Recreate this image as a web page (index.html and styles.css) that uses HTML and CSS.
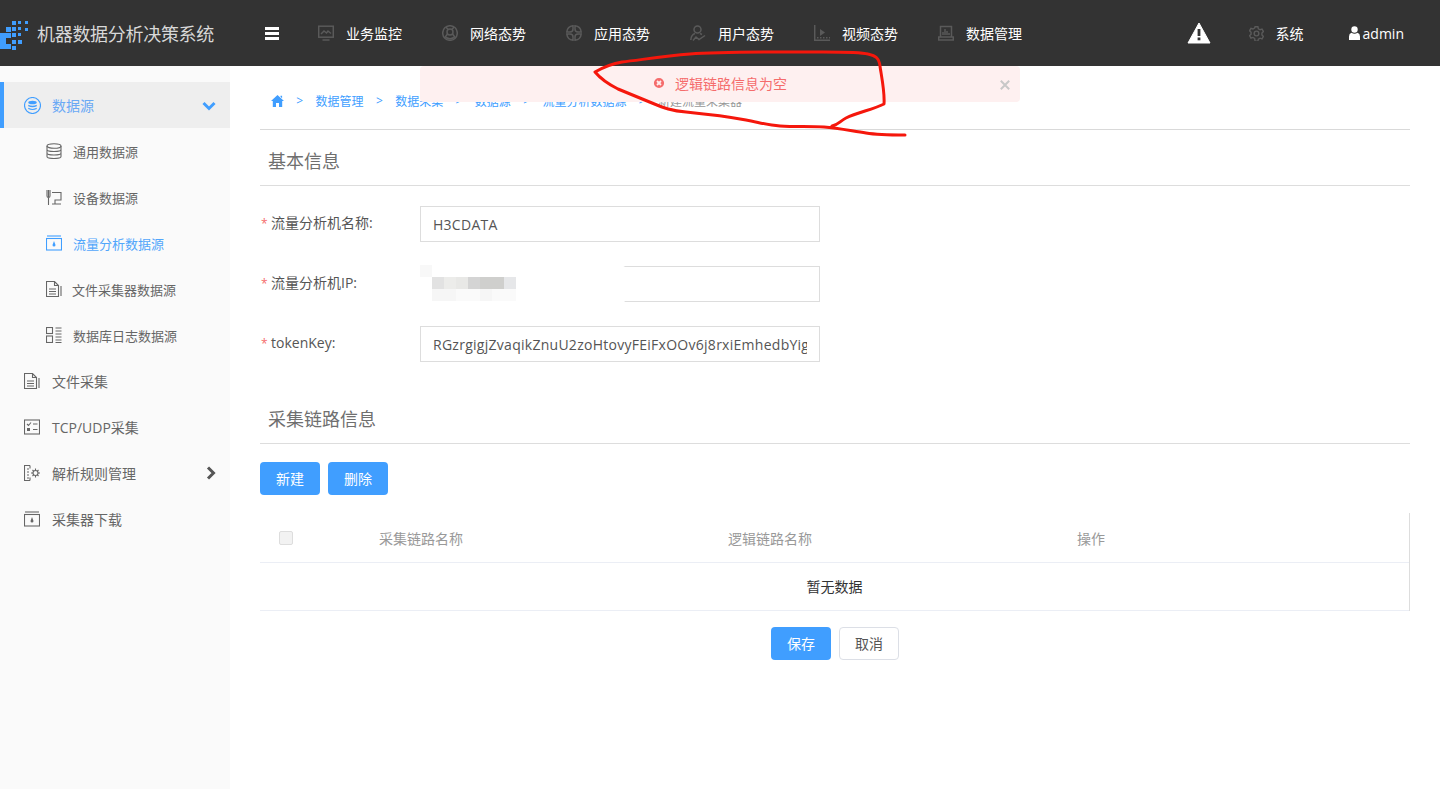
FILE: index.html
```html
<!DOCTYPE html>
<html lang="zh">
<head>
<meta charset="utf-8">
<title>机器数据分析决策系统</title>
<link rel="stylesheet" href="styles.css">
</head>
<body>
<header class="topbar">
  <div class="brand">
    <svg class="logo" width="30" height="36" viewBox="0 12 30 36">
      <path class="logo-l" d="M0 30h6v11h5v5H0z"/>
      <rect class="logo-b" x="6" y="24" width="5" height="5"/>
      <rect class="logo-b" x="6" y="30" width="5" height="5"/>
      <rect class="logo-b" x="12" y="18" width="4" height="4"/>
      <rect class="logo-b" x="12" y="24" width="4" height="4"/>
      <rect class="logo-b" x="12" y="30" width="4" height="4"/>
      <rect class="logo-b" x="12" y="37" width="4" height="4"/>
      <rect class="logo-b" x="12" y="43" width="4" height="4"/>
      <rect class="logo-b" x="18" y="18" width="3" height="3"/>
      <rect class="logo-b" x="18" y="24" width="3" height="3"/>
      <rect class="logo-b" x="18" y="30" width="3" height="3"/>
      <rect class="logo-b" x="18" y="37" width="4" height="4"/>
      <rect class="logo-b" x="25" y="18" width="3" height="3"/>
      <rect class="logo-b" x="25" y="25" width="3" height="3"/>
    </svg>
    <span class="brand-name">机器数据分析决策系统</span>
  </div>
  <div class="burger"><i></i><i></i><i></i></div>
  <nav class="nav">
    <a class="nav-item">
      <svg class="nav-ico" viewBox="0 0 16 16"><rect x="0.7" y="1.2" width="14.600" height="11"/><path d="M3 9l3-3 2.500 2L10 6l3 2.500M4.500 15h7"/></svg>
      <span>业务监控</span>
    </a>
    <a class="nav-item">
      <svg class="nav-ico" viewBox="0 0 16 16"><circle cx="8" cy="8" r="7.300"/><circle cx="8" cy="7" r="3"/><path d="M5.500 9L2.500 13M10.500 9l3 4M4 12.500q4 2.500 8 0M6 4.500L4 2M10 4.500L12 2"/></svg>
      <span>网络态势</span>
    </a>
    <a class="nav-item">
      <svg class="nav-ico" viewBox="0 0 16 16"><path d="M7 .8A7 7 0 0 0 .8 7H4Q7 7 7 4zM9 .8A7 7 0 0 1 15.200 7H12Q9 7 9 4zM7 15.200A7 7 0 0 1 .8 9H4Q7 9 7 12zM9 15.200A7 7 0 0 0 15.200 9H12Q9 9 9 12z"/></svg>
      <span>应用态势</span>
    </a>
    <a class="nav-item">
      <svg class="nav-ico" viewBox="0 0 16 16"><circle cx="7.500" cy="4.500" r="3.500"/><path d="M.8 15q.2-5 4.200-6.500M10 8.500l2 1M3 15.500l3-3.500 3 2.500 6-4"/></svg>
      <span>用户态势</span>
    </a>
    <a class="nav-item">
      <svg class="nav-ico" viewBox="0 0 16 16"><path d="M.7 0v15.300h15.300"/><path class="ico-fill" d="M6 4l5 3.500-5 3.500z"/><path class="ico-dash" d="M3 12.800h13"/></svg>
      <span>视频态势</span>
    </a>
    <a class="nav-item">
      <svg class="nav-ico" viewBox="0 0 16 16"><path d="M2.500 12V1.500h11V12M.7 12h14.600v3H.7zM5 10V7M7 10V4M9 10V6M11 10V8"/></svg>
      <span>数据管理</span>
    </a>
  </nav>
  <div class="top-right">
    <svg class="warn" width="24" height="22" viewBox="0 0 24 22"><path class="warn-tri" d="M12 1L23 21H1z"/><rect class="warn-mark" x="10.600" y="7" width="2.800" height="7"/><rect class="warn-mark" x="10.600" y="15.500" width="2.800" height="2.800"/></svg>
    <a class="sys">
      <svg class="nav-ico gear" viewBox="0 0 16 16"><circle cx="8" cy="8" r="2.500"/><path d="M6.500.8h3l.5 2.200 1.800 1 2.100-.7 1.500 2.600-1.600 1.500v2.200l1.600 1.500-1.500 2.600-2.100-.7-1.800 1-.5 2.200h-3L6 13.200l-1.800-1-2.100.7L.6 10.300l1.600-1.500V6.600L.6 5.100l1.500-2.600 2.100.7 1.800-1z"/></svg>
      <span>系统</span>
    </a>
    <a class="user">
      <svg class="user-ico" width="11" height="14" viewBox="0 0 11 14"><circle cx="5.500" cy="3.500" r="3.200"/><path d="M0 14v-3.500Q0 7.500 2.500 6.800q3 1.700 6 0Q11 7.500 11 10.500V14z"/></svg>
      <span>admin</span>
    </a>
  </div>
</header>

<div class="layout">
  <aside class="sidebar">
    <a class="menu-item active">
      <svg class="m-ico blue lg" viewBox="0 0 16 16"><circle cx="8" cy="8" r="7.500"/><ellipse class="solid" cx="8" cy="5.200" rx="4" ry="1.700"/><path class="solid" d="M4 7.200q4 2 8 0v1.500q-4 2-8 0zM4 10.200q4 2 8 0v1q-4 2-8 0z"/></svg>
      <span>数据源</span>
      <svg class="chev down" viewBox="0 0 14 10"><path d="M1.500 2L7 7.500 12.500 2"/></svg>
    </a>
    <a class="menu-item sub">
      <svg class="m-ico" viewBox="0 0 16 16"><ellipse cx="8" cy="3" rx="7" ry="2.300"/><path d="M1 3v10.500q0 2 7 2t7-2V3M1 6.500q0 2 7 2t7-2M1 10q0 2 7 2t7-2"/></svg>
      <span>通用数据源</span>
    </a>
    <a class="menu-item sub">
      <svg class="m-ico" viewBox="0 0 16 16"><path d="M1 1v6q0 1.500 1.500 1.500T4 7V1M2.500 1v15M6 3.500h9V11H9v4M6 15h9"/></svg>
      <span>设备数据源</span>
    </a>
    <a class="menu-item sub current">
      <svg class="m-ico blue" viewBox="0 0 16 16"><path d="M1 1h14"/><rect x=".5" y="3.500" width="15" height="11.500"/><path class="solid" d="M8 6l1.500 4a1.500 1.500 0 1 1-3 0z"/></svg>
      <span>流量分析数据源</span>
    </a>
    <a class="menu-item sub narrow">
      <svg class="m-ico" viewBox="0 0 16 16"><path d="M.5.500h8l4 4v11H.5zM8.500.500v4h4M15 5v10M3 8h7M3 10.500h7M3 13h7"/></svg>
      <span>文件采集器数据源</span>
    </a>
    <a class="menu-item sub">
      <svg class="m-ico" viewBox="0 0 16 16"><rect x=".5" y=".5" width="6" height="6"/><rect x=".5" y="9" width="6" height="6.500"/><path d="M9.500 1h6M9.500 4h6M9.500 7h6M9.500 10h6M9.500 13h6M9.500 15.500h6"/></svg>
      <span>数据库日志数据源</span>
    </a>
    <a class="menu-item">
      <svg class="m-ico" viewBox="0 0 16 16"><path d="M.5.500h8l4 4v11H.5zM8.500.500v4h4M15 5v10M3 8h7M3 10.500h7M3 13h7"/></svg>
      <span>文件采集</span>
    </a>
    <a class="menu-item">
      <svg class="m-ico" viewBox="0 0 16 16"><rect x=".5" y="1" width="15" height="14"/><path d="M3 5l1.500 1.500L7 3.500M9 5h4.500M9 10.500h4.500"/><rect class="solid" x="3" y="9" width="3" height="3"/></svg>
      <span>TCP/UDP采集</span>
    </a>
    <a class="menu-item">
      <svg class="m-ico" viewBox="0 0 16 16"><path d="M6 .5H.5v15H6M6 .5v3M6 12.500v3M3 4h2M3 7h2M3 10h2M3 13h2"/><circle cx="11.500" cy="8" r="2.500"/><path d="M11.500 3.500v2M11.500 10.500v2M7 8h2M14 8h2M8.500 5l1.300 1.300M13.200 9.700l1.300 1.300M8.500 11l1.300-1.300M13.200 6.300L14.500 5"/></svg>
      <span>解析规则管理</span>
      <svg class="chev right" viewBox="0 0 10 14"><path d="M2 1.500L7.500 7 2 12.500"/></svg>
    </a>
    <a class="menu-item">
      <svg class="m-ico" viewBox="0 0 16 16"><path d="M1 1h14"/><rect x=".5" y="3.500" width="15" height="11.500"/><path class="solid" d="M8 6l1.500 4a1.500 1.500 0 1 1-3 0z"/></svg>
      <span>采集器下载</span>
    </a>
  </aside>

  <main class="main">
    <div class="crumbs">
      <svg class="home" width="13" height="12" viewBox="0 0 13 12"><path d="M6.500 0L13 6h-1.800v6H8V8H5v4H1.800V6H0zM9.500 .8h1.600v2.400L9.500 1.800z"/></svg>
      <span class="sep">&gt;</span><a>数据管理</a>
      <span class="sep">&gt;</span><a>数据采集</a>
      <span class="sep">&gt;</span><a>数据源</a>
      <span class="sep">&gt;</span><a>流量分析数据源</a>
      <span class="sep">&gt;</span><span class="crumb-last">新建流量采集器</span>
    </div>

    <h2 class="section-title">基本信息</h2>
    <form class="form">
      <div class="row">
        <label class="lbl"><em>*</em>流量分析机名称:</label>
        <input class="field" type="text" value="H3CDATA">
      </div>
      <div class="row">
        <label class="lbl"><em>*</em>流量分析机IP:</label>
        <div class="field-wrap">
          <input class="field" type="text" value="">
          <div class="redact">
            <i class="m0"></i><b></b><b></b><b></b><b></b><b></b><b></b><b></b>
            <b></b><i class="c1"></i><i class="c2"></i><i class="c3"></i><i class="c4"></i><i class="c5"></i><i class="c5"></i><i class="c6"></i>
            <b></b><i class="c7"></i><i class="c7"></i><i class="c8"></i><i class="c8"></i><i class="c7"></i><i class="c8"></i><i class="c8"></i>
          </div>
        </div>
      </div>
      <div class="row">
        <label class="lbl"><em>*</em>tokenKey:</label>
        <input class="field" type="text" value="RGzrgigjZvaqikZnuU2zoHtovyFEiFxOOv6j8rxiEmhedbYigQpLk">
      </div>
    </form>

    <h2 class="section-title second">采集链路信息</h2>
    <div class="toolbar">
      <button class="btn primary" type="button">新建</button>
      <button class="btn primary" type="button">删除</button>
    </div>

    <table class="grid">
      <colgroup><col class="c-check"><col class="c-col"><col class="c-col"><col></colgroup>
      <thead>
        <tr>
          <th><span class="check"></span></th>
          <th>采集链路名称</th>
          <th>逻辑链路名称</th>
          <th>操作</th>
        </tr>
      </thead>
      <tbody>
        <tr><td class="empty" colspan="4">暂无数据</td></tr>
      </tbody>
    </table>

    <div class="actions">
      <button class="btn primary" type="button">保存</button>
      <button class="btn plain" type="button">取消</button>
    </div>
  </main>
</div>

<div class="toast">
  <svg class="toast-ico" width="12" height="12" viewBox="0 0 12 12"><circle cx="6" cy="6" r="6"/><path d="M4 4l4 4M8 4l-4 4"/></svg>
  <span>逻辑链路信息为空</span>
  <svg class="toast-close" width="10" height="10" viewBox="0 0 10 10"><path d="M.8.8l8.400 8.400M9.200.8L.8 9.200"/></svg>
</div>

<svg class="scribble" width="1440" height="789" viewBox="0 0 1440 789">
  <path d="M832 126C838 125 840 121 846 118C858 112 872 110 884 104C885 92 881 74 880 66C879 58 876 56 868 54C858 51 830 52 790 52C760 52 716 52 690 54C664 56 640 60 622 62C610 64 602 68 595 72C600 78 608 84 618 89C630 94 640 98 652 103C664 108 672 111 686 112C706 114 730 117 746 120C758 122 766 125 780 126C796 127 810 126 824 127C838 128 852 131 866 133C878 135 892 135 905 135"/>
</svg>
</body>
</html>
```
FILE: styles.css
```css
* { box-sizing: border-box; }
html, body { margin: 0; padding: 0; height: 100%; }
body {
  font-family: "Open Sans", "Noto Sans CJK SC", sans-serif;
  font-size: 14px;
  color: #606266;
  background: #fff;
  overflow: hidden;
}
a { text-decoration: none; }

/* header */
.topbar {
  display: flex;
  align-items: center;
  height: 66px;
  background: #333;
  color: #fff;
}
.brand { display: flex; align-items: center; width: 265px; }
.logo { flex: none; margin-right: 7px; }
.logo-l, .logo-b { fill: #409eff; }
.brand-name { font-size: 18px; letter-spacing: -.3px; color: #d8d8d8; }
.burger { display: flex; flex-direction: column; gap: 2px; width: 14px; }
.burger i { display: block; height: 3px; background: #fff; }
.nav { display: flex; margin-left: 39px; gap: 40px; }
.nav-item { display: flex; align-items: center; gap: 12px; color: #fff; }
.nav-ico {
  width: 16px; height: 16px; flex: none;
  fill: none; stroke: #5a5a5a; stroke-width: 1.500;
}
.ico-fill { fill: #5a5a5a; stroke: none; }
.ico-dash { stroke-dasharray: 1.500 1.500; }
.top-right { display: flex; align-items: center; margin-left: auto; padding-right: 36px; }
.warn { flex: none; margin-right: 38px; }
.warn-tri { fill: #fff; stroke: #fff; stroke-linejoin: round; }
.warn-mark { fill: #333; }
.sys { display: flex; align-items: center; gap: 12px; color: #fff; margin-right: 45px; }
.gear { width: 15px; height: 15px; }
.user { display: flex; align-items: center; gap: 3px; color: #fff; }
.user-ico { fill: #fff; }

/* layout */
.layout { display: flex; height: 723px; }
.sidebar { width: 230px; flex: none; padding-top: 16px; background: #fafafa; }
.menu-item {
  display: flex; align-items: center;
  height: 46px; padding-left: 24px; gap: 12px;
  color: #666; position: relative;
}
.menu-item.active { background: #eee; border-left: 4px solid #409eff; padding-left: 20px; gap: 11px; color: #6aa9f5; }
.menu-item.sub { padding-left: 46px; gap: 11px; font-size: 13px; }
.menu-item.sub.narrow { gap: 10px; }
.menu-item.current { color: #52a6fb; }
.m-ico {
  width: 16px; height: 16px; flex: none;
  fill: none; stroke: #666; stroke-width: 1.100;
}
.m-ico.lg { width: 17px; height: 17px; }
.m-ico .solid { fill: #666; stroke: none; }
.m-ico.blue { stroke: #409eff; }
.m-ico.blue .solid { fill: #409eff; }
.chev { position: absolute; fill: none; stroke-width: 3; }
.chev.down { right: 14px; top: 19px; width: 14px; height: 10px; stroke: #409eff; }
.chev.right { right: 14px; top: 16px; width: 10px; height: 14px; stroke: #555; }

/* main */
.main { flex: 1; min-width: 0; padding: 0 30px; }
.crumbs {
  display: flex; align-items: center;
  height: 64px; padding: 6px 0 0 11px;
  border-bottom: 1px solid #d9d9d9;
  font-size: 12px; color: #409eff;
}
.home { fill: #409eff; flex: none; }
.sep { width: 31.600px; text-align: center; }
.crumb-last { color: #999; }
.section-title {
  margin: 0; padding-left: 8px;
  height: 56px; line-height: 62px;
  font-size: 18px; font-weight: 400;
  color: #6f6f6f;
  border-bottom: 1px solid #ddd;
}
.section-title.second { margin-top: 26px; }

.form { display: flex; flex-direction: column; gap: 24px; margin-top: 20px; }
.row { display: flex; }
.lbl { width: 160px; flex: none; line-height: 34px; color: #555; }
.lbl em { display: inline-block; width: 11px; padding-left: 1px; font-style: normal; color: #f56c6c; font-size: 12px; }
.field-wrap { position: relative; width: 400px; height: 36px; }
.field {
  display: block; width: 400px; height: 36px;
  padding: 0 12px;
  border: 1px solid #ddd; border-radius: 0;
  font: inherit; letter-spacing: .27px; color: #555; background: #fff; outline: none;
}
.redact {
  position: absolute; left: 0; top: -1px;
  width: 212px; height: 41px;
  background: #fff;
  border-radius: 0 14px 20px 0;
  display: grid;
  grid-template-columns: repeat(8, 12px);
  grid-auto-rows: 12px;
}
.redact b, .redact i { display: block; }
.m0 { background: #f8f8f8; }
.c1 { background: #e2e2e2; }
.c2 { background: #ececea; }
.c3 { background: #e8e8e6; }
.c4 { background: #d4d4d4; }
.c5 { background: #cfcfcd; }
.c6 { background: #e6e7e9; }
.c7 { background: #f6f6f6; }
.c8 { background: #fafafa; }

.toolbar { display: flex; gap: 8px; margin-top: 18px; }
.btn {
  width: 60px; height: 33px; padding: 0 0 2px;
  border: 1px solid transparent; border-radius: 4px;
  font: inherit;
}
.btn.primary { background: #409eff; color: #fff; }
.btn.plain { background: #fff; border-color: #dcdfe6; color: #555; }

.grid {
  width: 1150px; margin-top: 18px;
  table-layout: fixed;
  border-collapse: separate; border-spacing: 0;
  border-right: 1px solid #ddd;
}
.c-check { width: 109px; }
.c-col { width: 349px; }
.grid th {
  height: 50px; padding: 0 10px;
  font-weight: 400; text-align: left; color: #999;
  border-bottom: 1px solid #ebeef5;
}
.check {
  display: block; width: 14px; height: 14px; margin: 0 0 0 9px;
  background: #f2f2f2; border: 1px solid #ddd; border-radius: 2px;
}
.empty {
  height: 48px; padding: 0 0 2px;
  text-align: center; color: #333;
  border-bottom: 1px solid #ebeef5;
}
.actions { display: flex; justify-content: center; gap: 8px; margin-top: 16px; }

/* overlays */
.toast {
  position: absolute; left: 420px; top: 66px;
  display: flex; align-items: center; justify-content: center; gap: 10px;
  width: 600px; height: 36px;
  padding-bottom: 2px;
  background: #fef0f0;
  border-radius: 4px;
  color: #f56c6c;
}
.toast-ico { fill: #f56c6c; stroke: #fef0f0; stroke-width: 1.800; flex: none; }
.toast-close {
  position: absolute; right: 10px; top: 14px;
  fill: none; stroke: #c8c8c8; stroke-width: 2;
}
.scribble {
  position: absolute; left: 0; top: 0;
  pointer-events: none;
  fill: none; stroke: #f5170c; stroke-width: 3; stroke-linecap: round; stroke-linejoin: round;
}
```
